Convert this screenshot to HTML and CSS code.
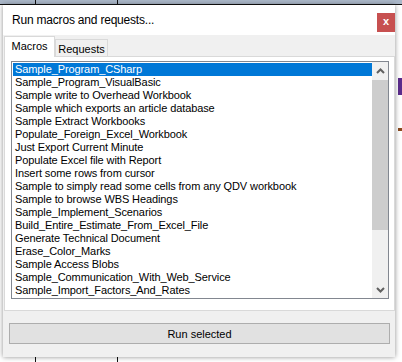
FILE: index.html
```html
<!DOCTYPE html>
<html lang="en">
<head>
  <meta charset="UTF-8">
  <title>Run macros and requests...</title>
  <link rel="stylesheet" href="styles.css">
</head>
<body>
  <div class="dialog">
    <!-- title bar -->
    <div class="titlebar">
      <span class="title">Run macros and requests...</span>
      <span class="close">x</span>
    </div>

    <!-- tabs -->
    <div class="tabs">
      <div class="tab active">Macros</div>
      <div class="tab">Requests</div>
    </div>

    <div class="page">
      <div class="listbox">
        <ul class="items">
          <li class="selected">Sample_Program_CSharp</li>
          <li>Sample_Program_VisualBasic</li>
          <li>Sample write to Overhead Workbook</li>
          <li>Sample which exports an article database</li>
          <li>Sample Extract Workbooks</li>
          <li>Populate_Foreign_Excel_Workbook</li>
          <li>Just Export Current Minute</li>
          <li>Populate Excel file with Report</li>
          <li>Insert some rows from cursor</li>
          <li>Sample to simply read some cells from any QDV workbook</li>
          <li>Sample to browse WBS Headings</li>
          <li>Sample_Implement_Scenarios</li>
          <li>Build_Entire_Estimate_From_Excel_File</li>
          <li>Generate Technical Document</li>
          <li>Erase_Color_Marks</li>
          <li>Sample Access Blobs</li>
          <li>Sample_Communication_With_Web_Service</li>
          <li>Sample_Import_Factors_And_Rates</li>
        </ul>
        <div class="scrollbar">
          <div class="arrow">
            <svg width="9" height="6" viewBox="0 0 9 6"><polyline points="1,5 4.5,1.5 8,5" fill="none" stroke="#606060" stroke-width="2"/></svg>
          </div>
          <div class="track"><div class="thumb"></div></div>
          <div class="arrow">
            <svg width="9" height="6" viewBox="0 0 9 6"><polyline points="1,1 4.5,4.5 8,1" fill="none" stroke="#606060" stroke-width="2"/></svg>
          </div>
        </div>
      </div>
    </div>

    <div class="footer">
      <button class="btn">Run selected</button>
    </div>
  </div>
</body>
</html>
```

FILE: styles.css
```css
/* desktop behind the dialog */
body {
  margin: 0;
  width: 402px;
  height: 362px;
  overflow: hidden;
  font-family: "Liberation Sans", Arial, sans-serif;
  background:
    linear-gradient(#5b2c8c, #5b2c8c) 398px 78px / 4px 17px no-repeat,
    linear-gradient(#8a4a1e, #8a4a1e) 398px 128px / 4px 3px no-repeat,
    linear-gradient(#111, #111) 0 4px / 402px 1px no-repeat,
    linear-gradient(to right, transparent 35px, #111 35px, #111 36px, transparent 36px,
                    transparent 117px, #111 117px, #111 118px, transparent 118px),
    linear-gradient(#aab7c8 0, #aab7c8 4px, #fff 4px);
}

.dialog {
  margin: 5px 0 0 3px;
  width: 392px;
  height: 352px;
  background-color: #f0f0f0;
  box-shadow: 0 0 5px rgba(0, 0, 0, 0.45);
  display: flex;
  flex-direction: column;
}

/* title bar */
.titlebar {
  height: 30px;
  background-color: #fff;
  display: flex;
  justify-content: space-between;
  align-items: flex-start;
}

.title {
  padding-left: 9px;
  line-height: 30px;
  font-size: 12px;
  letter-spacing: -0.2px;
  color: #000;
}

.close {
  margin-top: 8px;
  width: 18px;
  height: 19px;
  background-color: #c75050;
  color: #fff;
  font-size: 11px;
  font-weight: bold;
  line-height: 17px;
  text-align: center;
}

/* tabs */
.tabs {
  height: 21px;
  padding-left: 1px;
  display: flex;
  align-items: flex-end;
  position: relative;
  z-index: 1;
}

.tab {
  box-sizing: border-box;
  font-size: 11px;
  color: #000;
  text-align: center;
  border: 1px solid #d9d9d9;
  border-bottom: none;
}

.tab.active {
  width: 51px;
  height: 21px;
  margin-bottom: -1px;
  background-color: #fff;
  line-height: 19px;
}

.tab:not(.active) {
  width: 53px;
  height: 17px;
  background-color: #f0f0f0;
  line-height: 18px;
}

/* tab page */
.page {
  box-sizing: border-box;
  margin-left: 1px;
  width: 391px;
  height: 255px;
  padding: 4px 5px 11px 6px;
  background-color: #fff;
  border: 1px solid #d9d9d9;
}

.listbox {
  box-sizing: border-box;
  height: 238px;
  border: 1px solid #828790;
  display: flex;
}

.items {
  flex: 1;
  margin: 0;
  padding: 1px 0 1px 1px;
  list-style: none;
  overflow: hidden;
}

.items li {
  height: 13px;
  line-height: 13px;
  padding-left: 2px;
  font-size: 11px;
  letter-spacing: -0.1px;
  color: #000;
  white-space: nowrap;
  overflow: hidden;
}

.items li.selected {
  background-color: #0078d7;
  color: #fff;
}

/* scrollbar */
.scrollbar {
  width: 16px;
  display: flex;
  flex-direction: column;
  background-color: #f0f0f0;
}

.arrow {
  height: 17px;
  display: flex;
  align-items: center;
  justify-content: center;
}

.track {
  flex: 1;
  padding-top: 1px;
}

.thumb {
  height: 150px;
  background-color: #cdcdcd;
}

/* bottom button */
.footer {
  padding: 12px 0 0 6px;
}

.btn {
  box-sizing: border-box;
  width: 381px;
  height: 21px;
  padding: 0;
  font-family: "Liberation Sans", Arial, sans-serif;
  font-size: 11px;
  color: #000;
  background-color: #e1e1e1;
  border: 1px solid #adadad;
}
```
